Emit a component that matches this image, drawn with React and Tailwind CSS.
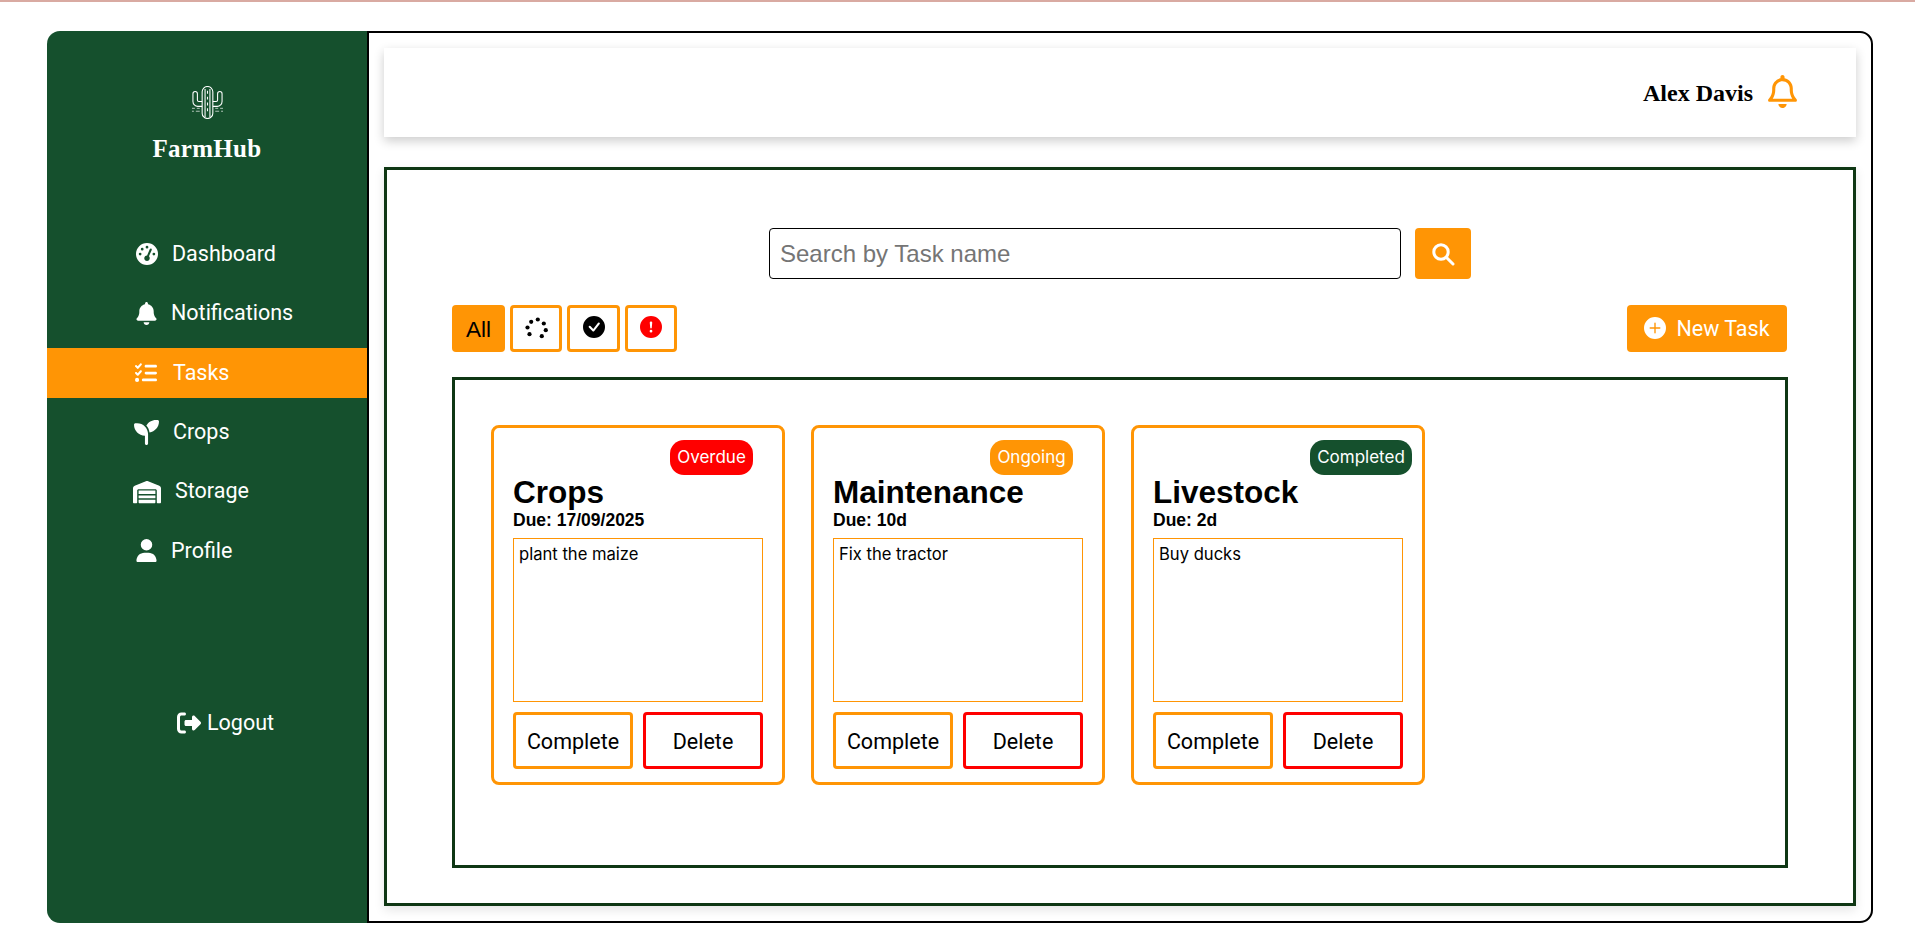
import React from 'react';
import {
  FaGaugeHigh,
  FaBell,
  FaListCheck,
  FaSeedling,
  FaWarehouse,
  FaUser,
  FaRightFromBracket,
  FaRegBell,
} from 'react-icons/fa6';
import { BsPlusCircleFill, BsCheckCircleFill, BsExclamationCircleFill } from 'react-icons/bs';

const navItems = [
  { label: 'Dashboard', Icon: FaGaugeHigh, size: 22, gap: 'gap-[14px]', pad: 'pl-[89px]' },
  { label: 'Notifications', Icon: FaBell, size: 23, gap: 'gap-[13px]', pad: 'pl-[88px]' },
  { label: 'Tasks', Icon: FaListCheck, size: 22, gap: 'gap-[16px]', pad: 'pl-[88px]', active: true },
  { label: 'Crops', Icon: FaSeedling, size: 25, gap: 'gap-[14px]', pad: 'pl-[87px]' },
  { label: 'Storage', Icon: FaWarehouse, size: 28, gap: 'gap-[14px]', pad: 'pl-[86px]' },
  { label: 'Profile', Icon: FaUser, size: 23, gap: 'gap-[13px]', pad: 'pl-[88px]' },
];

const tasks = [
  { title: 'Crops', due: 'Due: 17/09/2025', text: 'plant the maize', status: 'Overdue', badge: 'bg-[#ff0000] w-[83px]' },
  { title: 'Maintenance', due: 'Due: 10d', text: 'Fix the tractor', status: 'Ongoing', badge: 'bg-[#ff9505] w-[83px]' },
  { title: 'Livestock', due: 'Due: 2d', text: 'Buy ducks', status: 'Completed', badge: 'bg-[#15502d] w-[102px]' },
];

const spinnerDots = [
  [12.8, 2.5],
  [18.8, 6.5],
  [20.8, 13.2],
  [16.8, 19.2],
  [4.5, 17.2],
  [2.5, 10.5],
  [6.2, 4.8],
];

const CactusLogo = () => (
  <svg width="33" height="33" viewBox="0 0 34 34" fill="none" stroke="white" strokeWidth="1.1">
    <path d="M11.5 28V6a5.5 5.5 0 0 1 11 0v22a5.5 5.5 0 0 1-11 0z" />
    <path d="M11.5 21H7a5 5 0 0 1-5-5V8a2.3 2.3 0 0 1 4.6 0v6.5a1.5 1.5 0 0 0 1.5 1.5h3.4" />
    <path d="M22.5 21H27a5 5 0 0 0 5-5V8a2.3 2.3 0 0 0-4.6 0v6.5a1.5 1.5 0 0 1-1.5 1.5h-3.4" />
    <path d="M14.5 3v29M19.5 3v29" />
    <path d="M17 5v3M17 11v3M17 17v3M17 23v3" />
    <path d="M1 23h3M6 23h3M25 23h3M30 23h3M1 26h2M5 26h4M25 26h4M31 26h2" strokeWidth="0.7" />
  </svg>
);

const Sidebar = () => (
  <aside className="w-[320px] shrink-0 bg-[#15502d] rounded-l-[13px] flex flex-col text-white font-['Roboto',sans-serif]">
    <div className="flex flex-col items-center pt-[55px]">
      <CactusLogo />
      <span className="mt-[15px] font-['Liberation_Serif',serif] font-bold text-[25px] leading-[30px] tracking-[0.3px]">FarmHub</span>
    </div>
    <nav className="mt-[65px] flex flex-col gap-[9.4px]">
      {navItems.map(({ label, Icon, size, gap, pad, active }) => (
        <a
          key={label}
          className={`h-[50px] flex items-center text-[21.5px] ${gap} ${pad} ${active ? 'bg-[#ff9505]' : ''}`}
        >
          <Icon size={size} />
          {label}
        </a>
      ))}
    </nav>
    <a className="mt-[131px] pl-[130px] flex items-center gap-[6px] text-[21.5px]">
      <FaRightFromBracket size={24} />
      Logout
    </a>
  </aside>
);

const TaskCard = ({ task }) => (
  <div className="w-[294px] h-[360px] border-[3px] border-[#ff9505] rounded-[8px] px-[19px] pt-[12px] flex flex-col">
    <div className="flex ml-[157px]">
      <span className={`h-[35px] shrink-0 rounded-[14px] flex items-center justify-center text-white text-[17px] font-['Inter',sans-serif] ${task.badge}`}>
        {task.status}
      </span>
    </div>
    <h3 className="-mt-[1px] text-[31.5px] leading-[36px] font-bold">{task.title}</h3>
    <p className="-mt-[1px] text-[17.5px] leading-[22px] font-bold">{task.due}</p>
    <div className="mt-[7px] h-[164px] border border-[#ff9505] px-[5px] py-[3px] text-[16.6px] leading-[24px] font-['Inter',sans-serif]">
      {task.text}
    </div>
    <div className="mt-[10px] flex gap-[10px] font-['Roboto',sans-serif] text-[21.5px]">
      <button className="w-[120px] h-[57px] pt-[3px] border-[3px] border-[#ff9505] rounded-[4px]">Complete</button>
      <button className="w-[120px] h-[57px] pt-[3px] border-[3px] border-[#ff0000] rounded-[4px]">Delete</button>
    </div>
  </div>
);

const FilterButton = ({ width, children }) => (
  <button className={`${width} h-[47px] border-[3px] border-[#ff9505] rounded-[4px] flex items-center justify-center`}>
    {children}
  </button>
);

const App = () => (
  <div className="h-[948px] bg-white font-['Liberation_Sans',sans-serif] text-black">
    <div className="h-[2px] bg-[#d9aaa2]" />
    <div className="ml-[47px] mt-[29px] w-[1826px] h-[892px] flex">
      <Sidebar />
      <main className="flex-1 border-2 border-black rounded-r-[13px] pt-[15px] px-[15px]">
        <header className="h-[89px] bg-white shadow-[0_4px_10px_rgba(0,0,0,0.2)] flex items-center justify-end gap-[13px] pr-[57px]">
          <span className="font-['Liberation_Serif',serif] font-bold text-[24px]">Alex Davis</span>
          <FaRegBell size={33} className="-mt-[2px] text-[#ff9505]" />
        </header>
        <section className="mt-[30px] h-[739px] border-[3px] border-[#0f3714] shadow-[0_4px_10px_rgba(0,0,0,0.1)] pt-[58px] px-[65px]">
          <div className="flex justify-center gap-[14px]">
            <input
              readOnly
              placeholder="Search by Task name"
              className="w-[632px] h-[51px] border border-black rounded-[4px] px-[10px] text-[24px] placeholder:text-[#757575] outline-none"
            />
            <button className="w-[56px] h-[51px] bg-[#ff9505] rounded-[4px] flex items-center justify-center">
              <svg width="24" height="24" viewBox="0 0 24 24" fill="none" stroke="white" strokeWidth="3" strokeLinecap="round">
                <circle cx="10" cy="10" r="7.2" />
                <path d="M15.5 15.5L22 22" />
              </svg>
            </button>
          </div>
          <div className="mt-[26px] flex items-center justify-between pr-[1px]">
            <div className="flex gap-[5px]">
              <button className="w-[53px] h-[47px] pt-[2px] bg-[#ff9505] rounded-[4px] text-[22.5px]">All</button>
              <FilterButton width="w-[52px]">
                <svg width="23" height="23" viewBox="0 0 23 23" fill="black">
                  {spinnerDots.map(([cx, cy]) => (
                    <circle key={cx} cx={cx} cy={cy} r="2.1" />
                  ))}
                </svg>
              </FilterButton>
              <FilterButton width="w-[53px]"><BsCheckCircleFill size={22} className="-mt-[3px]" /></FilterButton>
              <FilterButton width="w-[52px]"><BsExclamationCircleFill size={22} className="-mt-[3px] text-[#ff0000]" /></FilterButton>
            </div>
            <button className="w-[160px] h-[47px] bg-[#ff9505] rounded-[4px] text-white flex items-center justify-center gap-[10px] text-[21.5px] font-['Roboto',sans-serif]">
              <BsPlusCircleFill size={22} className="-mt-[2px]" />
              <span className="mt-[2px]">New Task</span>
            </button>
          </div>
          <div className="mt-[25px] h-[491px] border-[3px] border-[#0f3714] pt-[45px] pl-[36px] flex gap-[26px]">
            {tasks.map((task) => (
              <TaskCard key={task.title} task={task} />
            ))}
          </div>
        </section>
      </main>
    </div>
  </div>
);

export default App;
